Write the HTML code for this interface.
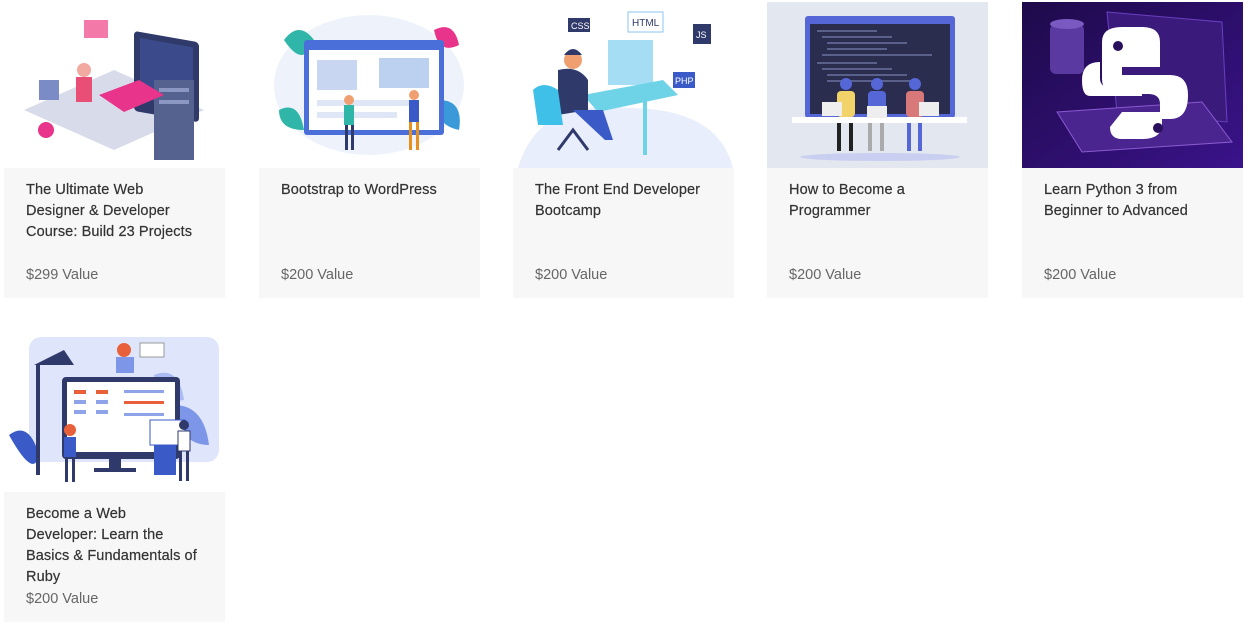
<!DOCTYPE html>
<html><head><meta charset="utf-8"><style>
*{margin:0;padding:0;box-sizing:border-box}
body{width:1245px;height:627px;background:#fff;font-family:"Liberation Sans",sans-serif;position:relative;overflow:hidden}
.card{position:absolute;width:221px}
.img{position:absolute;left:0;top:0;width:221px;overflow:hidden}
.txt{position:absolute;left:0;width:221px;background:#f7f7f7;padding:12px 0 0 22px}
.t{font-size:14.5px;line-height:21px;color:#333;white-space:nowrap;letter-spacing:0.1px;-webkit-text-stroke:0.2px #333}
.p{position:absolute;left:22px;font-size:14.5px;color:#666}
</style></head><body>

<div class="card" style="left:4px;top:0">
 <div class="img" style="height:168px;background:#fff">
  <svg width="221" height="168">
   <polygon points="20,110 110,70 200,110 110,150" fill="#d8dcea"/>
   <rect x="130" y="8" width="65" height="80" rx="4" fill="#2f3a6b" transform="skewY(10)"/>
   <rect x="136" y="14" width="53" height="60" fill="#3b4a8a" transform="skewY(10)"/>
   <rect x="150" y="80" width="40" height="80" fill="#55628f"/>
   <rect x="155" y="88" width="30" height="4" fill="#8b97c2"/><rect x="155" y="100" width="30" height="4" fill="#8b97c2"/>
   <polygon points="95,95 135,80 160,95 120,112" fill="#e8348a"/>
   <rect x="80" y="20" width="24" height="18" fill="#f37aa8"/>
   <circle cx="80" cy="70" r="7" fill="#f1a9a0"/>
   <rect x="72" y="77" width="16" height="25" fill="#e94e77"/>
   <rect x="35" y="80" width="20" height="20" fill="#7b8bc6"/>
   <circle cx="42" cy="130" r="8" fill="#e8348a"/>
  </svg>
 </div>
 <div class="txt" style="top:168px;height:130px"><div class="t">The Ultimate Web<br>Designer &amp; Developer<br>Course: Build 23 Projects</div><div class="p" style="top:99px">$299 Value</div></div>
</div>

<div class="card" style="left:259px;top:0">
 <div class="img" style="height:168px;background:#fff">
  <svg width="221" height="168">
   <ellipse cx="110" cy="85" rx="95" ry="70" fill="#eef3fb"/>
   <path d="M25,40 q15,-20 30,0 q-10,30 -30,0" fill="#2fb6a8"/>
   <path d="M175,30 q20,-10 25,15 q-20,10 -25,-15" fill="#e8348a"/>
   <path d="M180,100 q25,0 20,30 q-25,-5 -20,-30" fill="#3a9ad9"/>
   <path d="M20,110 q20,-10 25,20 q-25,0 -25,-20" fill="#2fb6a8"/>
   <rect x="45" y="40" width="140" height="95" rx="3" fill="#4a6fd8"/>
   <rect x="50" y="50" width="130" height="80" fill="#fff"/>
   <rect x="58" y="60" width="40" height="30" fill="#c8d6f2"/>
   <rect x="120" y="58" width="50" height="30" fill="#bcd0f0"/>
   <rect x="58" y="100" width="100" height="6" fill="#dfe7f7"/>
   <rect x="58" y="112" width="80" height="6" fill="#dfe7f7"/>
   <circle cx="90" cy="100" r="5" fill="#f0a070"/><rect x="85" y="105" width="10" height="20" fill="#2fb6a8"/>
   <rect x="86" y="125" width="3" height="25" fill="#2f3a6b"/><rect x="92" y="125" width="3" height="25" fill="#2f3a6b"/>
   <circle cx="155" cy="95" r="5" fill="#f0a070"/><rect x="150" y="100" width="10" height="22" fill="#3a5bc7"/>
   <rect x="150" y="122" width="3" height="28" fill="#e8901e"/><rect x="157" y="122" width="3" height="28" fill="#e8901e"/>
  </svg>
 </div>
 <div class="txt" style="top:168px;height:130px"><div class="t">Bootstrap to WordPress</div><div class="p" style="top:99px">$200 Value</div></div>
</div>

<div class="card" style="left:513px;top:0">
 <div class="img" style="height:168px;background:#fff">
  <svg width="221" height="168">
   <path d="M5,168 q20,-70 110,-60 q90,0 105,60z" fill="#e8eefb"/>
   <rect x="55" y="18" width="22" height="14" fill="#2f3a6b"/><text x="58" y="29" font-size="9" fill="#fff" font-family="Liberation Sans">CSS</text>
   <rect x="115" y="12" width="35" height="20" fill="#fff" stroke="#8ec5f0"/><text x="119" y="26" font-size="10" fill="#2f3a6b" font-family="Liberation Sans">HTML</text>
   <rect x="180" y="24" width="18" height="20" fill="#2f3a6b"/><text x="183" y="38" font-size="9" fill="#fff" font-family="Liberation Sans">JS</text>
   <rect x="160" y="72" width="22" height="16" fill="#3a5bc7"/><text x="162" y="84" font-size="9" fill="#fff" font-family="Liberation Sans">PHP</text>
   <rect x="95" y="40" width="45" height="45" fill="#7fd0f0" opacity=".7"/>
   <polygon points="70,95 150,80 165,95 85,112" fill="#6fd3e8"/>
   <rect x="130" y="100" width="4" height="55" fill="#6fd3e8"/>
   <circle cx="60" cy="60" r="9" fill="#f0a070"/><path d="M51,55 q9,-12 18,0" fill="#2f3a6b"/>
   <path d="M45,70 q20,-5 30,10 l0,30 l-30,5z" fill="#2f3a6b"/>
   <path d="M20,90 q10,-10 25,0 l5,35 l-25,0z" fill="#3ec0e8"/>
   <path d="M60,110 l30,0 l10,30 l-8,0z" fill="#3a5bc7"/>
   <path d="M45,150 l15,-20 l15,20" stroke="#2f3a6b" stroke-width="3" fill="none"/>
  </svg>
 </div>
 <div class="txt" style="top:168px;height:130px"><div class="t">The Front End Developer<br>Bootcamp</div><div class="p" style="top:99px">$200 Value</div></div>
</div>

<div class="card" style="left:767px;top:0">
 <div class="img" style="height:168px;top:2px;background:#e3e7f0">
  <svg width="221" height="166">
   <rect x="38" y="14" width="150" height="102" rx="3" fill="#5566d6"/>
   <rect x="43" y="22" width="140" height="90" fill="#2b2d4e"/>
   <g fill="#59608a"><rect x="50" y="28" width="60" height="2"/><rect x="55" y="34" width="70" height="2"/><rect x="60" y="40" width="80" height="2"/><rect x="60" y="46" width="60" height="2"/><rect x="55" y="52" width="110" height="2"/><rect x="50" y="60" width="60" height="2"/><rect x="55" y="66" width="70" height="2"/><rect x="60" y="72" width="80" height="2"/><rect x="60" y="78" width="90" height="2"/></g>
   <rect x="25" y="115" width="175" height="6" fill="#fff"/>
   <ellipse cx="113" cy="155" rx="80" ry="4" fill="#c9cff0"/>
   <circle cx="79" cy="82" r="6" fill="#5566d6"/><rect x="70" y="89" width="18" height="26" rx="4" fill="#f1d36a"/>
   <rect x="70" y="121" width="4" height="28" fill="#222"/><rect x="82" y="121" width="4" height="28" fill="#222"/>
   <rect x="55" y="100" width="20" height="14" fill="#eee"/>
   <circle cx="110" cy="82" r="6" fill="#5566d6"/><rect x="101" y="89" width="18" height="26" rx="4" fill="#5566d6"/>
   <rect x="101" y="121" width="4" height="28" fill="#aaa"/><rect x="113" y="121" width="4" height="28" fill="#aaa"/>
   <rect x="100" y="104" width="20" height="12" fill="#eee"/>
   <circle cx="148" cy="82" r="6" fill="#5566d6"/><rect x="139" y="89" width="18" height="26" rx="4" fill="#d87878"/>
   <rect x="140" y="121" width="4" height="28" fill="#5566d6"/><rect x="151" y="121" width="4" height="28" fill="#5566d6"/>
   <rect x="152" y="100" width="20" height="14" fill="#eee"/>
  </svg>
 </div>
 <div class="txt" style="top:168px;height:130px"><div class="t">How to Become a<br>Programmer</div><div class="p" style="top:99px">$200 Value</div></div>
</div>

<div class="card" style="left:1022px;top:0">
 <div class="img" style="height:168px;top:2px;background:#2a0f5c">
  <svg width="221" height="166">
   <defs><linearGradient id="g" x1="0" y1="0" x2="1" y2="1"><stop offset="0" stop-color="#1e0a4a"/><stop offset="1" stop-color="#3a138a"/></linearGradient></defs>
   <rect width="221" height="166" fill="url(#g)"/>
   <polygon points="85,10 200,20 205,120 95,110" fill="#3a1a7a" stroke="#6a3fc0"/>
   <polygon points="35,110 180,100 210,140 60,150" fill="#4a2590" stroke="#8a5ad0"/>
   <rect x="28" y="22" width="34" height="50" rx="6" fill="#5a3aa0"/>
   <ellipse cx="45" cy="22" rx="17" ry="5" fill="#7a5ac0"/>
   <path d="M80,40 q0,-15 20,-15 l20,0 q18,0 18,15 l0,25 l-38,0 l0,8 l48,0 q18,0 18,20 q0,24 -18,24 l-10,0 l0,-15 q0,-10 -12,-10 l-28,0 q-18,0 -18,-15z" fill="#fff"/>
   <path d="M60,78 q0,-18 18,-18 l0,16 q0,10 12,10 l30,0 l0,8 l-52,0 q-8,0 -8,-16z" fill="#fff"/>
   <path d="M100,110 l40,0 l0,12 q0,15 -20,15 l-20,0 q-12,0 -12,-12z" fill="#fff"/>
   <circle cx="96" cy="44" r="5" fill="#2a0f5c"/><circle cx="136" cy="126" r="5" fill="#2a0f5c"/>
  </svg>
 </div>
 <div class="txt" style="top:168px;height:130px"><div class="t">Learn Python 3 from<br>Beginner to Advanced</div><div class="p" style="top:99px">$200 Value</div></div>
</div>

<div class="card" style="left:4px;top:335px">
 <div class="img" style="height:157px;background:#fff">
  <svg width="221" height="157">
   <rect x="25" y="2" width="190" height="125" rx="12" fill="#dfe6fb"/>
   <path d="M5,100 q20,-15 30,20 q-5,25 -30,-20" fill="#3a5bc7"/>
   <path d="M170,70 q30,0 35,40 q-30,0 -35,-40" fill="#7d96e8"/>
   <path d="M150,40 q25,-10 30,25 q-25,5 -30,-25" fill="#a9bbf2"/>
   <path d="M30,30 l30,-15 l10,15z" fill="#2f3a6b"/><rect x="32" y="30" width="4" height="110" fill="#2f3a6b"/>
   <rect x="58" y="42" width="118" height="82" rx="4" fill="#2f3a6b"/>
   <rect x="63" y="47" width="108" height="70" fill="#fff"/>
   <g fill="#e8603a"><rect x="70" y="55" width="12" height="4"/><rect x="92" y="55" width="12" height="4"/><rect x="120" y="66" width="40" height="3"/></g>
   <g fill="#8fa4e8"><rect x="70" y="65" width="12" height="4"/><rect x="92" y="65" width="12" height="4"/><rect x="70" y="75" width="12" height="4"/><rect x="92" y="75" width="12" height="4"/><rect x="120" y="55" width="40" height="3"/><rect x="120" y="78" width="40" height="3"/></g>
   <rect x="105" y="124" width="12" height="10" fill="#2f3a6b"/><rect x="90" y="133" width="42" height="4" fill="#2f3a6b"/>
   <circle cx="120" cy="15" r="7" fill="#e8603a"/><rect x="112" y="22" width="18" height="16" fill="#7d96e8"/>
   <rect x="136" y="8" width="24" height="14" fill="#fff" stroke="#999"/>
   <circle cx="66" cy="95" r="6" fill="#e8603a"/><rect x="60" y="102" width="12" height="20" fill="#3a5bc7"/><rect x="61" y="122" width="3" height="25" fill="#2f3a6b"/><rect x="68" y="122" width="3" height="25" fill="#2f3a6b"/>
   <rect x="146" y="85" width="35" height="25" fill="#fff" stroke="#3a5bc7"/>
   <circle cx="180" cy="90" r="5" fill="#2f3a6b"/><rect x="174" y="96" width="12" height="20" fill="#fff" stroke="#2f3a6b"/><rect x="175" y="116" width="3" height="30" fill="#2f3a6b"/><rect x="182" y="116" width="3" height="30" fill="#2f3a6b"/>
   <rect x="150" y="110" width="22" height="30" fill="#3a5bc7"/>
  </svg>
 </div>
 <div class="txt" style="top:157px;height:130px"><div class="t">Become a Web<br>Developer: Learn the<br>Basics &amp; Fundamentals of<br>Ruby</div><div class="p" style="top:99px">$200 Value</div></div>
</div>

</body></html>
